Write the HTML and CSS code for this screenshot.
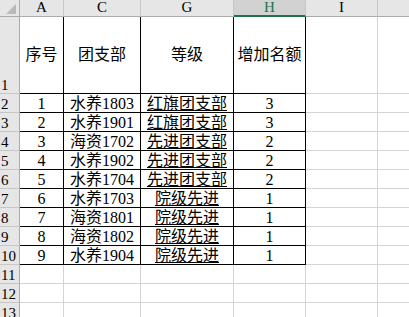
FILE: index.html
```html
<!DOCTYPE html>
<html>
    <head>
        <meta charset="utf-8">
        <title>Sheet1</title>
        <link rel="stylesheet" href="styles.css">
    </head>
    <body>
        <div class="sheet">
            <!-- column headers -->
            <div class="corner"><span class="tri"></span></div>
            <div class="ch">A</div>
            <div class="ch">C</div>
            <div class="ch">G</div>
            <div class="ch sel">H</div>
            <div class="ch">I</div>
            <div class="ch"></div>

            <!-- row 1: titles -->
            <div class="rh">1</div>
            <div class="d title">序号</div>
            <div class="d title">团支部</div>
            <div class="d title">等级</div>
            <div class="d title">增加名额</div>
            <div class="c"></div>
            <div class="c"></div>

            <div class="rh">2</div>
            <div class="d">1</div>
            <div class="d">水养1803</div>
            <div class="d u">红旗团支部</div>
            <div class="d">3</div>
            <div class="c"></div>
            <div class="c"></div>

            <div class="rh">3</div>
            <div class="d">2</div>
            <div class="d">水养1901</div>
            <div class="d u">红旗团支部</div>
            <div class="d">3</div>
            <div class="c"></div>
            <div class="c"></div>

            <div class="rh">4</div>
            <div class="d">3</div>
            <div class="d">海资1702</div>
            <div class="d u">先进团支部</div>
            <div class="d">2</div>
            <div class="c"></div>
            <div class="c"></div>

            <div class="rh">5</div>
            <div class="d">4</div>
            <div class="d">水养1902</div>
            <div class="d u">先进团支部</div>
            <div class="d">2</div>
            <div class="c"></div>
            <div class="c"></div>

            <div class="rh">6</div>
            <div class="d">5</div>
            <div class="d">水养1704</div>
            <div class="d u">先进团支部</div>
            <div class="d">2</div>
            <div class="c"></div>
            <div class="c"></div>

            <div class="rh">7</div>
            <div class="d">6</div>
            <div class="d">水养1703</div>
            <div class="d u">院级先进</div>
            <div class="d">1</div>
            <div class="c"></div>
            <div class="c"></div>

            <div class="rh">8</div>
            <div class="d">7</div>
            <div class="d">海资1801</div>
            <div class="d u">院级先进</div>
            <div class="d">1</div>
            <div class="c"></div>
            <div class="c"></div>

            <div class="rh">9</div>
            <div class="d">8</div>
            <div class="d">海资1802</div>
            <div class="d u">院级先进</div>
            <div class="d">1</div>
            <div class="c"></div>
            <div class="c"></div>

            <div class="rh">10</div>
            <div class="d">9</div>
            <div class="d">水养1904</div>
            <div class="d u">院级先进</div>
            <div class="d">1</div>
            <div class="c"></div>
            <div class="c"></div>

            <div class="rh">11</div>
            <div class="c"></div><div class="c"></div><div class="c"></div><div class="c"></div><div class="c"></div><div class="c"></div>
            <div class="rh">12</div>
            <div class="c"></div><div class="c"></div><div class="c"></div><div class="c"></div><div class="c"></div><div class="c"></div>
            <!-- row 13 is cut by the window edge -->
            <div class="rh end">13</div>
            <div class="c end"></div><div class="c end"></div><div class="c end"></div><div class="c end"></div><div class="c end"></div><div class="c end"></div>
        </div>
    </body>
</html>
```

FILE: styles.css
```css
body {
    margin: 0;
    overflow: hidden;
    background: #fff;
    font-family: "Liberation Serif", "Noto Sans CJK SC", serif;
    font-size: 16px;
    color: #000;
}

.sheet {
    display: grid;
    grid-template-columns: 20px 44px 77px 93px 72px 72px 1fr;
    grid-template-rows: 17px 77px repeat(11, 19px) 14px;
}

.sheet > div {
    box-sizing: border-box;
    border-right: 1px solid #d4d4d4;
    border-bottom: 1px solid #d4d4d4;
    display: flex;
    align-items: flex-end;
    justify-content: center;
    line-height: 16px;
    white-space: nowrap;
    overflow: hidden;
}

/* last column runs off the window */
.sheet > div:nth-child(7n) {
    border-right: none;
}

.sheet > .end {
    border-bottom: none;
    align-items: flex-start;
    padding-top: 2px;
}

/* headers */
.sheet > .corner {
    background: #e6e6e6;
    border-right-color: #ababab;
    border-bottom-color: #ababab;
    justify-content: flex-end;
    padding: 0 3px 2px 0;
}

.tri {
    width: 10px;
    height: 10px;
    background: #b9b9b9;
    clip-path: polygon(100% 0, 100% 100%, 0 100%);
}

.sheet > .ch {
    background: #e6e6e6;
    border-right-color: #c6c6c6;
    border-bottom-color: #ababab;
    font-size: 15px;
    padding-bottom: 1px;
}

.sheet > .ch.sel {
    background: #d2d2d2;
    color: #217346;
    border-bottom: 2px solid #217346;
    padding-bottom: 0;
}

.sheet > .rh {
    background: #e6e6e6;
    border-right-color: #ababab;
    border-bottom-color: #c6c6c6;
    justify-content: flex-start;
    padding-left: 1px;
    font-size: 15px;
}

/* data range */
.sheet > .d {
    border-right-color: #000;
    border-bottom-color: #000;
}

.sheet > .title {
    align-items: center;
}

.sheet > .u {
    text-decoration: underline;
    text-underline-offset: 1px;
}
```
